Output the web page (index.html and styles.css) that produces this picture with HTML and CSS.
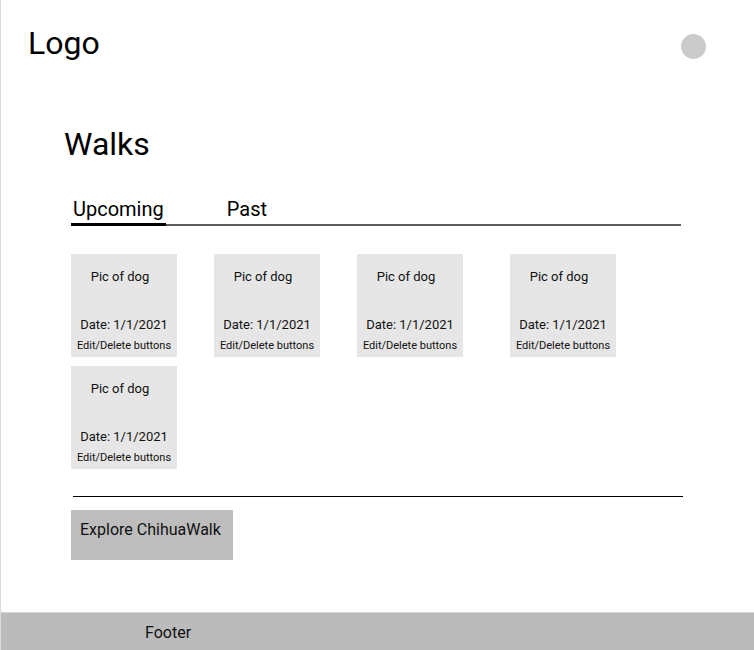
FILE: index.html
```html
<!DOCTYPE html>
<html>
<head>
<meta charset="utf-8">
<link rel="stylesheet" href="styles.css">
</head>
<body>
<div class="page">
  <header class="header">
    <div class="logo">Logo</div>
    <div class="avatar"></div>
  </header>
  <main class="main">
    <h1 class="title">Walks</h1>
    <nav class="tabs">
      <div class="tab active">Upcoming</div>
      <div class="tab">Past</div>
    </nav>
    <section class="cards">
      <div class="card"><div class="pic">Pic of dog</div><div class="date">Date: 1/1/2021</div><div class="actions">Edit/Delete buttons</div></div>
      <div class="card"><div class="pic">Pic of dog</div><div class="date">Date: 1/1/2021</div><div class="actions">Edit/Delete buttons</div></div>
      <div class="card"><div class="pic">Pic of dog</div><div class="date">Date: 1/1/2021</div><div class="actions">Edit/Delete buttons</div></div>
      <div class="card card-wide"><div class="pic">Pic of dog</div><div class="date">Date: 1/1/2021</div><div class="actions">Edit/Delete buttons</div></div>
      <div class="card"><div class="pic">Pic of dog</div><div class="date">Date: 1/1/2021</div><div class="actions">Edit/Delete buttons</div></div>
    </section>
    <hr class="divider">
    <button class="explore">Explore ChihuaWalk</button>
  </main>
  <footer class="footer">Footer</footer>
</div>
</body>
</html>
```
FILE: styles.css
```css
html, body {
  margin: 0;
  padding: 0;
  background: #fff;
}
body {
  font-family: Roboto, "Liberation Sans", sans-serif;
  color: #000;
}
.page {
  border-left: 1px solid #dcdcdc;
  min-height: 650px;
  box-sizing: border-box;
  display: flex;
  flex-direction: column;
}
.header {
  display: flex;
  justify-content: space-between;
  align-items: flex-start;
  padding: 27px 48px 0 27px;
}
.logo {
  font-size: 32px;
  line-height: 32px;
}
.avatar {
  width: 25px;
  height: 25px;
  border-radius: 50%;
  background: #cbcbcb;
  margin-top: 7px;
}
.main {
  margin-left: 70px;
  width: 610px;
  flex: 1;
}
.title {
  margin: 69px 0 0 -7px;
  font-size: 32px;
  line-height: 32px;
  font-weight: 400;
}
.tabs {
  display: flex;
  gap: 59px;
  margin-top: 39px;
  border-bottom: 2px solid #5a5a5a;
}
.tab {
  font-size: 20px;
  line-height: 20px;
  padding: 0 2px 4px;
  margin-bottom: -2px;
  border-bottom: 3px solid transparent;
}
.tab.active {
  border-bottom-color: #000;
}
.cards {
  display: flex;
  flex-wrap: wrap;
  column-gap: 37px;
  row-gap: 9px;
  margin-top: 28px;
}
.card {
  width: 106px;
  height: 103px;
  box-sizing: border-box;
  background: #e6e6e6;
  display: flex;
  flex-direction: column;
  align-items: center;
  padding: 15px 0 5px;
  color: #111;
}
.card-wide {
  margin-left: 10px;
}
.pic {
  font-size: 13px;
  line-height: 15px;
  margin-right: 8px;
}
.date {
  font-size: 13px;
  line-height: 15px;
  margin-top: auto;
}
.actions {
  font-size: 11px;
  line-height: 13px;
  margin-top: 7px;
}
.divider {
  margin: 27px 0 0 2px;
  width: 610px;
  border: 0;
  border-top: 1px solid #000;
  height: 0;
}
.explore {
  margin-top: 13px;
  width: 162px;
  height: 50px;
  background: #bdbdbd;
  border: 0;
  padding: 10px 0 0 9px;
  text-align: left;
  font-family: Roboto, "Liberation Sans", sans-serif;
  font-size: 16px;
  line-height: 19px;
  color: #111;
  box-sizing: border-box;
  display: flex;
  align-items: flex-start;
}
.footer {
  background: #bbb;
  border-top: 1px solid #d6d6d6;
  height: 38px;
  box-sizing: border-box;
  padding: 10px 0 0 144px;
  font-size: 16px;
  line-height: 19px;
  color: #111;
}
```
